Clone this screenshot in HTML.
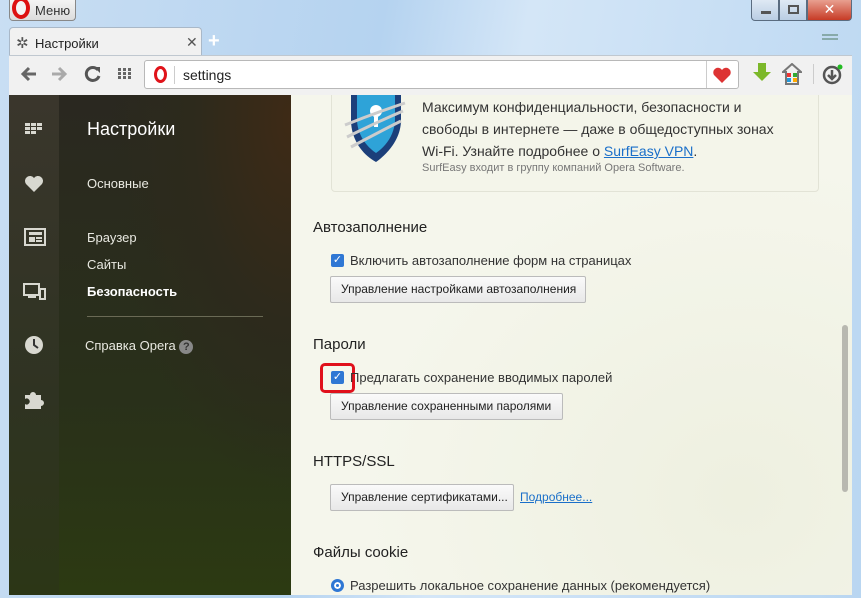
<!DOCTYPE html>
<html><head><meta charset="utf-8"><style>
*{margin:0;padding:0;box-sizing:border-box}
body{width:861px;height:598px;overflow:hidden;font-family:"Liberation Sans","DejaVu Sans",sans-serif;background:#bfd9f2;position:relative}
.abs{position:absolute}
.frame{left:0;top:0;width:861px;height:598px;background:linear-gradient(100deg,#c9def3 0%,#b5d3f0 40%,#d4e6f7 55%,#b9d6f1 100%)}
.menu{left:9px;top:0;width:67px;height:21px;background:linear-gradient(#f4f4f4,#dcdcdc);border:1px solid #888;border-top:none;border-radius:0 0 4px 4px;font-size:13px;color:#333}
.tab{left:9px;top:27px;width:193px;height:30px;background:#f1f1f1;border:1px solid #a9b8c8;border-bottom:none;border-radius:4px 4px 0 0;font-size:13px;color:#222}
.toolbar{left:9px;top:55px;width:843px;height:40px;background:#f1f1f1;border-top:1px solid #c0c8d0}
.addr{left:144px;top:60px;width:595px;height:29px;background:#fff;border:1px solid #b8b8b8;border-radius:3px}
.content{left:9px;top:95px;width:843px;height:500px;background:#f4f5ea;overflow:hidden}
.icons{left:0;top:0;width:50px;height:500px;background:linear-gradient(#3a362c,#2f3322 60%,#2c3616)}
.nav{left:50px;top:0;width:232px;height:500px;background:radial-gradient(ellipse at 100% 5%,#3e2a16 0%,#2d2a1c 30%,transparent 55%),linear-gradient(#2a2820,#29301a 60%,#2c3a12)}
.nav div{position:absolute;color:#e8e8e0;font-size:13px;white-space:nowrap}
.main{left:282px;top:0;width:561px;height:500px;background:radial-gradient(ellipse at 80% 80%,#eef0e0,#f5f6ec 60%)}
.h{font-size:15px;color:#222}
.t{font-size:13px;color:#333;white-space:nowrap}
.btn{background:linear-gradient(#fafafa,#e8e8e8);border:1px solid #bbb;border-radius:2px;font-size:12px;color:#222;padding:0 10px;line-height:25px;height:27px;white-space:nowrap;overflow:hidden}
.cb{width:13px;height:13px;background:#2f77d4;border-radius:2px;color:#fff;font-size:11px;line-height:13px;text-align:center;font-weight:bold}
.win{top:0;height:21px;border:1px solid #5a6c80;border-top:none}
</style></head><body>
<div class="abs frame"></div>
<div class="abs menu"><span class="abs" style="left:2px;top:-3px;width:18px;height:22px;border:4px solid #d11;border-radius:50%;background:#f4f4f4"></span><span class="abs" style="left:25px;top:3px">Меню</span></div>
<div class="abs win" style="left:751px;width:28px;background:linear-gradient(#dfe9f4,#b9cde3);border-radius:0 0 0 4px"><span class="abs" style="left:9px;top:11px;width:10px;height:3px;background:#555"></span></div>
<div class="abs win" style="left:779px;width:28px;background:linear-gradient(#dfe9f4,#b9cde3)"><span class="abs" style="left:8px;top:5px;width:11px;height:9px;border:2px solid #555"></span></div>
<div class="abs win" style="left:807px;width:45px;background:linear-gradient(#e8a090,#c73b26);border-radius:0 0 4px 0;color:#fff;font-weight:bold;font-size:14px;text-align:center;line-height:19px">✕</div>
<div class="abs tab"><span class="abs" style="left:6px;top:6px;font-size:15px;color:#555">✲</span><span class="abs" style="left:25px;top:8px">Настройки</span><span class="abs" style="left:176px;top:6px;color:#555;font-size:14px">✕</span></div>
<div class="abs" style="left:208px;top:30px;font-size:20px;color:#fff;font-weight:bold">+</div>
<div class="abs" style="left:822px;top:34px;width:16px;height:2px;background:#8aa;box-shadow:0 4px 0 #8aa"></div>
<div class="abs toolbar"></div>
<svg class="abs" style="left:20px;top:66px" width="18" height="16"><path d="M16 8H4M9 2 3 8l6 6" stroke="#666" stroke-width="3" fill="none"/></svg>
<svg class="abs" style="left:50px;top:66px" width="18" height="16"><path d="M2 8h12M9 2l6 6-6 6" stroke="#aaa" stroke-width="3" fill="none"/></svg>
<svg class="abs" style="left:84px;top:65px" width="18" height="18"><path d="M14 5A6.5 6.5 0 1 0 15 11" stroke="#555" stroke-width="3" fill="none"/><path d="M10 2h6v6z" fill="#555"/></svg>
<svg class="abs" style="left:118px;top:68px" width="14" height="12"><g fill="#666"><rect x="0" y="0" width="3" height="3"/><rect x="5" y="0" width="3" height="3"/><rect x="10" y="0" width="3" height="3"/><rect x="0" y="4" width="3" height="3"/><rect x="5" y="4" width="3" height="3"/><rect x="10" y="4" width="3" height="3"/><rect x="0" y="8" width="3" height="3"/><rect x="5" y="8" width="3" height="3"/><rect x="10" y="8" width="3" height="3"/></g></svg>
<div class="abs addr"><span class="abs" style="left:9px;top:5px;width:13px;height:17px;border:3px solid #e0131a;border-radius:50%"></span><span class="abs" style="left:29px;top:5px;width:1px;height:18px;background:#ccc"></span><span class="abs" style="left:38px;top:6px;font-size:14px;color:#222">settings</span><span class="abs" style="left:561px;top:0;width:1px;height:27px;background:#ccc"></span><svg class="abs" style="left:567px;top:6px" width="20" height="17"><path d="M10 16 2 8a4.5 4.5 0 0 1 8-5 4.5 4.5 0 0 1 8 5z" fill="#d33"/></svg></div>
<svg class="abs" style="left:752px;top:63px" width="20" height="22"><path d="M6 0h8v9h5l-9 9-9-9h5z" fill="#7cb82a"/></svg>
<svg class="abs" style="left:782px;top:63px" width="20" height="22"><path d="M10 1 1 9h3v12h12V9h3z" fill="none" stroke="#777" stroke-width="2"/><rect x="5" y="10" width="4" height="4" fill="#e33"/><rect x="11" y="10" width="4" height="4" fill="#3a3"/><rect x="5" y="15" width="4" height="4" fill="#29d"/><rect x="11" y="15" width="4" height="4" fill="#fa0"/></svg>
<div class="abs" style="left:813px;top:64px;width:1px;height:20px;background:#ccc"></div>
<svg class="abs" style="left:822px;top:63px" width="22" height="22"><circle cx="10" cy="12" r="8" fill="none" stroke="#555" stroke-width="2.5"/><path d="M10 7v8M6 12l4 4 4-4" stroke="#555" stroke-width="2.5" fill="none"/><circle cx="18" cy="4" r="2.5" fill="#2b2"/></svg>
<div class="abs content">
 <div class="abs icons">
  <svg class="abs" style="left:16px;top:28px" width="20" height="12"><g fill="#d8d8d0"><rect x="0" y="0" width="5" height="3"/><rect x="6" y="0" width="5" height="3"/><rect x="12" y="0" width="5" height="3"/><rect x="0" y="4" width="5" height="3"/><rect x="6" y="4" width="5" height="3"/><rect x="12" y="4" width="5" height="3"/><rect x="0" y="8" width="5" height="3"/><rect x="6" y="8" width="5" height="3"/></g></svg>
  <svg class="abs" style="left:15px;top:80px" width="20" height="18"><path d="M10 17 2 9a4.5 4.5 0 0 1 8-6 4.5 4.5 0 0 1 8 6z" fill="#d8d8d0"/></svg>
  <svg class="abs" style="left:15px;top:133px" width="22" height="18"><rect x="1" y="1" width="20" height="16" fill="none" stroke="#d8d8d0" stroke-width="2"/><rect x="5" y="4" width="13" height="3" fill="#d8d8d0"/><rect x="5" y="9" width="6" height="5" fill="#d8d8d0"/><rect x="12" y="9" width="6" height="2" fill="#d8d8d0"/><rect x="12" y="12" width="6" height="2" fill="#d8d8d0"/></svg>
  <svg class="abs" style="left:14px;top:188px" width="24" height="18"><rect x="1" y="1" width="15" height="11" fill="none" stroke="#d8d8d0" stroke-width="2"/><rect x="5" y="13" width="8" height="2" fill="#d8d8d0"/><rect x="17" y="6" width="5" height="10" fill="none" stroke="#d8d8d0" stroke-width="2"/></svg>
  <svg class="abs" style="left:15px;top:240px" width="20" height="20"><circle cx="10" cy="10" r="9" fill="#d8d8d0"/><path d="M10 4v6l4 3" stroke="#333" stroke-width="2" fill="none"/></svg>
  <svg class="abs" style="left:14px;top:293px" width="22" height="22"><path d="M2 7h5a3 3 0 1 1 6 0h5v5a3 3 0 1 1 0 6v3H2v-5a3 3 0 1 0 0-5z" fill="#d8d8d0"/></svg>
 </div>
 <div class="abs nav">
  <div style="left:28px;top:24px;font-size:18px;color:#fff">Настройки</div>
  <div style="left:28px;top:81px">Основные</div>
  <div style="left:28px;top:135px">Браузер</div>
  <div style="left:28px;top:162px">Сайты</div>
  <div style="left:28px;top:189px;font-weight:bold;color:#fff">Безопасность</div>
  <div style="left:28px;top:221px;width:176px;height:1px;background:#6a6a55"></div>
  <div style="left:26px;top:243px">Справка Opera <span style="display:inline-block;width:14px;height:14px;border-radius:50%;background:#888;color:#333;font-size:11px;text-align:center;line-height:14px;font-weight:bold">?</span></div>
 </div>
 <div class="abs main">
  <div class="abs" style="left:40px;top:-5px;width:488px;height:102px;border:1px solid #e2e3d6;border-radius:4px;background:#f4f5ea"></div>
  <svg class="abs" style="left:52px;top:0" width="64" height="72"><path d="M8 0h50v25c0 20-15 35-25 42C20 60 8 45 8 25z" fill="#1c3f7a"/><path d="M14 0h38v24c0 16-10 28-19 34C24 52 14 40 14 24z" fill="#2ea3d8"/><circle cx="33" cy="16" r="6" fill="#fff"/><rect x="31" y="18" width="4" height="14" fill="#fff"/><path d="M2 30q30-12 60-22M4 42q28-14 56-26M8 52q26-14 50-26" stroke="#ccc" stroke-width="3" fill="none"/></svg>
  <div class="abs t" style="left:131px;top:1px;font-size:14px;line-height:22px">Максимум конфиденциальности, безопасности и<br>свободы в интернете — даже в общедоступных зонах<br>Wi-Fi. Узнайте подробнее о <span style="color:#1a6fc9;text-decoration:underline">SurfEasy VPN</span>.</div>
  <div class="abs" style="left:131px;top:67px;font-size:11px;color:#777">SurfEasy входит в группу компаний Opera Software.</div>
  <div class="abs h" style="left:22px;top:124px">Автозаполнение</div>
  <div class="abs cb" style="left:40px;top:159px">✓</div>
  <div class="abs t" style="left:59px;top:158px">Включить автозаполнение форм на страницах</div>
  <div class="abs btn" style="left:39px;top:181px;width:256px">Управление настройками автозаполнения</div>
  <div class="abs h" style="left:22px;top:241px">Пароли</div>
  <div class="abs cb" style="left:40px;top:276px">✓</div>
  <div class="abs" style="left:29px;top:268px;width:35px;height:30px;border:3px solid #e0101c;border-radius:5px"></div>
  <div class="abs t" style="left:59px;top:275px">Предлагать сохранение вводимых паролей</div>
  <div class="abs btn" style="left:39px;top:298px;width:233px">Управление сохраненными паролями</div>
  <div class="abs h" style="left:22px;top:358px">HTTPS/SSL</div>
  <div class="abs btn" style="left:39px;top:389px;width:184px">Управление сертификатами...</div>
  <div class="abs t" style="left:229px;top:395px;font-size:12px;color:#1a6fc9;text-decoration:underline">Подробнее...</div>
  <div class="abs h" style="left:22px;top:449px">Файлы cookie</div>
  <div class="abs" style="left:40px;top:484px;width:13px;height:13px;border-radius:50%;background:#2f77d4;border:3px solid #2f77d4;box-shadow:inset 0 0 0 2px #fff"></div>
  <div class="abs t" style="left:59px;top:483px">Разрешить локальное сохранение данных (рекомендуется)</div>
  <div class="abs" style="left:551px;top:230px;width:6px;height:167px;background:#b8b8b0;border-radius:3px"></div>
 </div>
</div>
</body></html>
